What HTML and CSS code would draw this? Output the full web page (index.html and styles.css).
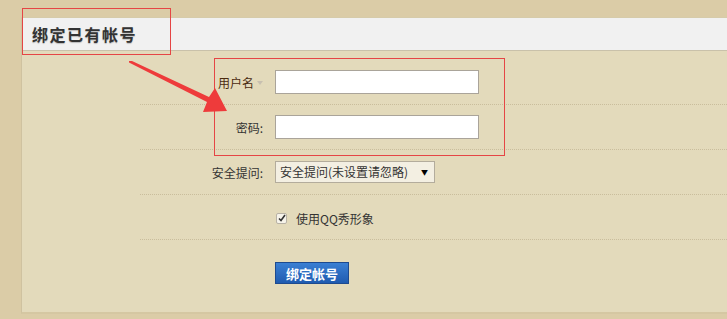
FILE: index.html
```html
<!DOCTYPE html>
<html lang="zh-CN">
<head>
  <meta charset="UTF-8" />
  <title>绑定已有帐号</title>
  <link rel="stylesheet" href="styles.css">
</head>
<body>
  <div class="panel">
    <div class="panel-head">绑定已有帐号</div>
    <div class="panel-body">
      <form class="bind-form">
        <div class="row">
          <label class="label">用户名<span class="caret"></span></label>
          <div class="field"><input class="txt" type="text"></div>
        </div>
        <div class="row">
          <label class="label">密码:</label>
          <div class="field"><input class="txt" type="password"></div>
        </div>
        <div class="row">
          <label class="label">安全提问:</label>
          <div class="field">
            <div class="select">安全提问(未设置请忽略)<span class="arrow">▼</span></div>
          </div>
        </div>
        <div class="row">
          <label class="label"></label>
          <div class="field">
            <label class="check"><span class="box">
              <svg width="8" height="8" viewBox="0 0 8 8"><path d="M1 4.5 L3 6.5 L7 1" fill="none" stroke="#333" stroke-width="1.6"/></svg>
            </span>使用QQ秀形象</label>
          </div>
        </div>
        <div class="row last">
          <label class="label"></label>
          <div class="field"><button type="button" class="btn">绑定帐号</button></div>
        </div>
      </form>
    </div>
  </div>

  <!-- annotations -->
  <div class="mark mark-title"></div>
  <div class="mark mark-fields"></div>
  <svg class="pointer" width="110" height="60" viewBox="0 0 110 60">
    <polygon points="0,0 3,0 80,36 86,27 98,50 74,51 78,41 0,1.5" fill="#ee3b3b"/>
  </svg>
</body>
</html>
```

FILE: styles.css
```css
body {
  margin: 0;
  background: #dbcca7;
  font-family: "Noto Sans CJK SC", "DejaVu Sans", sans-serif;
  font-size: 12px;
  color: #333;
  height: 319px;
  overflow: hidden;
}

.panel {
  margin: 17px 0 0 21px;
  height: 297px;
  background: #e3dabb;
  border-left: 1px solid #cfc2a0;
  border-top: 1px solid #d6cbaa;
  border-bottom: 2px solid #d5c7a2;
  box-sizing: border-box;
}

.panel-head {
  height: 32px;
  line-height: 32px;
  background: #f1f1f1;
  border-bottom: 1px solid #c9c1aa;
  padding-left: 10px;
  font-size: 16px;
  letter-spacing: 1.5px;
  font-weight: bold;
  color: #333;
  text-shadow: 0 1px 1px #bbb;
}

.panel-body {
  padding: 9px 0 0 118px;
}

.row {
  display: flex;
  align-items: center;
  height: 44px;
  border-bottom: 1px dotted #c9bd9c;
}

.row.last {
  border-bottom: none;
  align-items: flex-start;
  padding-top: 22px;
}

.label {
  width: 123px;
  text-align: right;
  color: #333;
}

.row:first-child .label {
  color: #4a2a10;
}

.caret {
  display: inline-block;
  width: 0;
  height: 0;
  margin: 0 0 2px 3px;
  border-left: 3px solid transparent;
  border-right: 3px solid transparent;
  border-top: 4px solid #c8c0b0;
  vertical-align: middle;
}

.field {
  padding-left: 12px;
}

.txt {
  display: block;
  width: 204px;
  height: 24px;
  margin: 0;
  border: 1px solid #aaa49a;
  background: #fff;
  box-sizing: border-box;
}

.select {
  width: 160px;
  height: 22px;
  line-height: 20px;
  border: 1px solid #b3ac9c;
  background: #f3efe2;
  box-sizing: border-box;
  padding-left: 4px;
  position: relative;
  color: #333;
}

.select .arrow {
  position: absolute;
  right: 6px;
  top: 0;
  font-size: 7px;
  color: #000;
}

.check {
  display: flex;
  align-items: center;
  margin-top: 2px;
  color: #333;
}

.box {
  width: 11px;
  height: 11px;
  margin: 0 9px 0 1px;
  border: 1px solid #b8b2a6;
  background: #f6f3ea;
  border-radius: 2px;
  box-sizing: border-box;
  display: flex;
  align-items: center;
  justify-content: center;
}

.btn {
  width: 74px;
  height: 22px;
  padding: 0;
  border: 1px solid #1d4a8f;
  background: linear-gradient(#3a7fd3, #1f5bb0);
  color: #fff;
  font-family: inherit;
  font-size: 13px;
  font-weight: bold;
}

.mark {
  position: absolute;
  border: 1px solid #e54545;
}

.mark-title {
  left: 22px;
  top: 8px;
  width: 147px;
  height: 45px;
}

.mark-fields {
  left: 214px;
  top: 58px;
  width: 289px;
  height: 96px;
}

.pointer {
  position: absolute;
  left: 129px;
  top: 61px;
}
```
